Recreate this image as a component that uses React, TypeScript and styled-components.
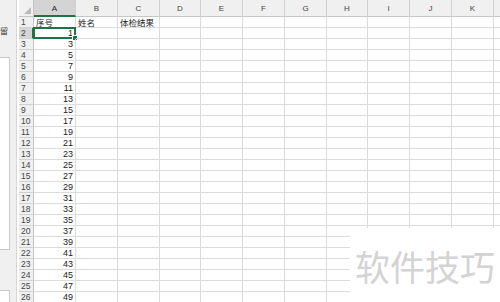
import React from "react";
import styled, { createGlobalStyle, css } from "styled-components";

const Global = createGlobalStyle`
  html, body { margin: 0; padding: 0; background: #ffffff; }
  body { width: 500px; height: 302px; overflow: hidden; font-family: "Noto Sans", "Noto Sans CJK SC", sans-serif; }
`;

const Page = styled.div`
  position: relative;
  display: flex;
  width: 500px;
  height: 302px;
  overflow: hidden;
  background: #fff;
`;

const SidePanel = styled.div`
  width: 16px;
  flex: none;
  background: #f0f0f0;
  border-right: 1px solid #d6d6d6;
  display: flex;
  flex-direction: column;
  overflow: hidden;
  margin-right: 2px;
`;

const PanelLabel = styled.div`
  margin-top: 26px;
  height: 10px;
  font-size: 8px;
  line-height: 10px;
  color: #333;
  white-space: nowrap;
  margin-left: -8px;
  font-family: "Noto Sans CJK SC", sans-serif;
`;

const PanelBox = styled.div<{ $h: number; $top: number }>`
  margin-top: ${(p) => p.$top}px;
  height: ${(p) => p.$h}px;
  width: 10px;
  background: #fff;
  border: 1px solid #c9c9c9;
  border-left: none;
  box-sizing: border-box;
  flex: none;
`;

const COLS = ["A", "B", "C", "D", "E", "F", "G", "H", "I", "J", "K", ""];
const WIDTHS = [42, 42, 42, 41, 42, 42, 42, 41, 42, 42, 42, 42];

const Sheet = styled.div`
  display: grid;
  grid-template-columns: 15px ${WIDTHS.map((w) => w + "px").join(" ")};
  grid-template-rows: 17px repeat(26, 11px);
  flex: none;
`;

const cellBase = css`
  box-sizing: border-box;
  border-right: 1px solid #dcdcdc;
  border-bottom: 1px solid #dcdcdc;
  font-size: 9px;
  line-height: 10px;
  overflow: visible;
  white-space: nowrap;
  position: relative;
`;

const Corner = styled.div`
  ${cellBase};
  background: #f0f0f0;
  border-color: #c6c6c6;
  &::after {
    content: "";
    position: absolute;
    right: 2px;
    bottom: 2px;
    border-style: solid;
    border-width: 0 0 7px 7px;
    border-color: transparent transparent #b9b9b9 transparent;
  }
`;

const ColHead = styled.div<{ $sel?: boolean }>`
  ${cellBase};
  background: ${(p) => (p.$sel ? "#d4d4d4" : "#f0f0f0")};
  border-right-color: #d0d0d0;
  border-bottom: ${(p) => (p.$sel ? "2px solid #217346" : "1px solid #c6c6c6")};
  color: ${(p) => (p.$sel ? "#222" : "#444")};
  font-family: "Liberation Sans", sans-serif;
  font-size: 8px;
  display: flex;
  align-items: flex-end;
  justify-content: center;
  padding-bottom: ${(p) => (p.$sel ? "1px" : "2px")};
`;

const RowHead = styled.div<{ $sel?: boolean }>`
  ${cellBase};
  background: ${(p) => (p.$sel ? "#d4d4d4" : "#f0f0f0")};
  border-bottom-color: #d0d0d0;
  border-right: ${(p) => (p.$sel ? "2px solid #217346" : "1px solid #c6c6c6")};
  color: #444;
  font-family: "Liberation Sans", sans-serif;
  font-size: 8.5px;
  padding-left: 2px;
  display: flex;
  align-items: center;
`;

const Cell = styled.div<{ $num?: boolean }>`
  ${cellBase};
  color: #222;
  padding: 0 2px;
  font-family: ${(p) => (p.$num ? '"Liberation Sans", sans-serif' : '"Noto Sans CJK SC", sans-serif')};
  font-size: ${(p) => (p.$num ? "9px" : "8.5px")};
  display: flex;
  align-items: flex-end;
  justify-content: ${(p) => (p.$num ? "flex-end" : "flex-start")};
`;

const Selection = styled.div`
  position: absolute;
  left: -1px;
  top: -1px;
  right: -1px;
  bottom: -1px;
  border: 2px solid #217346;
  pointer-events: none;
  &::after {
    content: "";
    position: absolute;
    right: -4px;
    bottom: -4px;
    width: 4px;
    height: 4px;
    background: #217346;
    border: 1px solid #fff;
  }
`;

const Watermark = styled.div`
  position: absolute;
  left: 350px;
  top: 228px;
  right: 0;
  bottom: 0;
  background: #fff;
  display: flex;
  align-items: center;
  padding-left: 5px;
  font-family: "Noto Sans CJK SC", sans-serif;
  font-size: 35px;
  color: #d3d3d3;
  white-space: nowrap;
`;

const HEAD = ["序号", "姓名", "体检结果"];

export default function App() {
  const rows = Array.from({ length: 26 }, (_, i) => i + 1);
  return (
    <Page>
      <Global />
      <SidePanel>
        <PanelLabel>保留</PanelLabel>
        <PanelBox $top={21} $h={193} />
        <PanelBox $top={40} $h={20} />
      </SidePanel>
      <Sheet>
        <Corner />
        {COLS.map((c, i) => (
          <ColHead key={i} $sel={c === "A"}>
            {c}
          </ColHead>
        ))}
        {rows.map((r) => (
          <React.Fragment key={r}>
            <RowHead $sel={r === 2}>{r}</RowHead>
            {COLS.map((c, ci) => {
              if (r === 1 && ci < 3) return <Cell key={ci}>{HEAD[ci]}</Cell>;
              if (r >= 2 && ci === 0)
                return (
                  <Cell key={ci} $num>
                    {2 * (r - 1) - 1}
                    {r === 2 && <Selection />}
                  </Cell>
                );
              return <Cell key={ci} />;
            })}
          </React.Fragment>
        ))}
      </Sheet>
      <Watermark>软件技巧</Watermark>
    </Page>
  );
}
